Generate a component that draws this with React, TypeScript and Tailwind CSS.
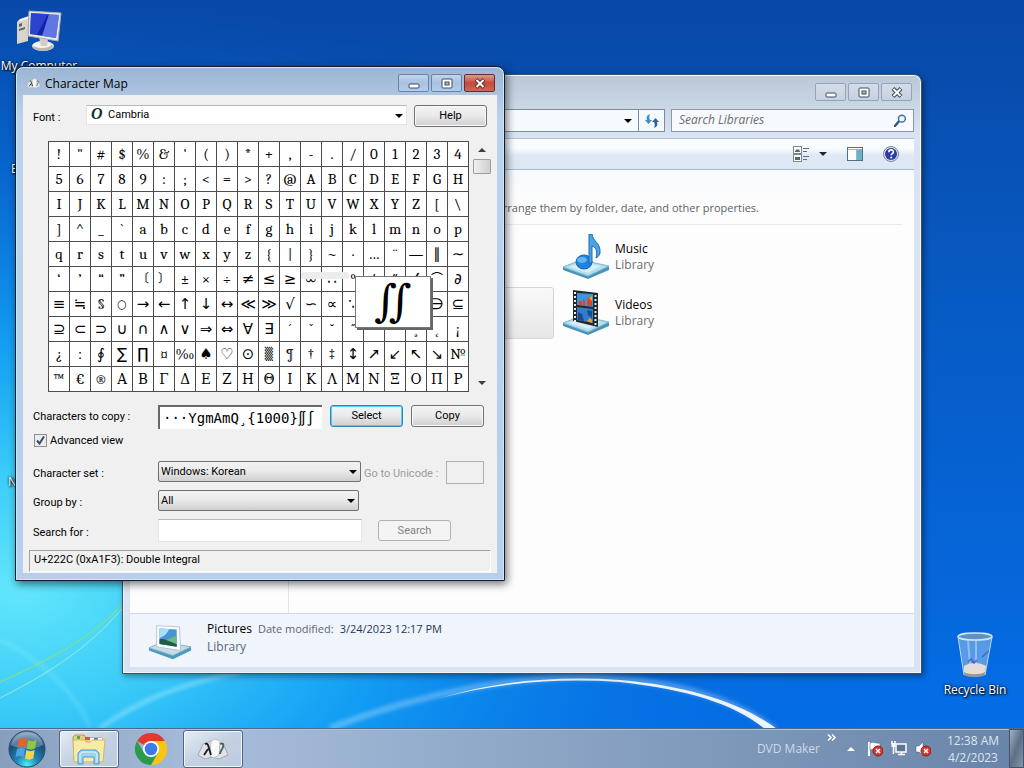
import { useState } from "react"
import type { ReactNode } from "react"

const rows = [
  "!\"#$%&'()*+,-./01234",
  "56789:;<=>?@ABCDEFGH",
  "IJKLMNOPQRSTUVWXYZ[\\",
  "]^_`abcdefghijklmnop",
  "qrstuvwxyz{|}~·…¨—∥∼",
  "‘’“”〔〕±×÷≠≤≥∞∴°′″∠⌒∂",
  "≡≒§○→←↑↓↔≪≫√∽∝∵∫∬∈∋⊆",
  "⊇⊂⊃∪∩∧∨⇒⇔∀∃´ˇ˘˝˚˙¸˛¡",
  "¿ː∮∑∏¤‰♠♡⊙▒¶†‡↕↗↙↖↘№",
  "™€®ΑΒΓΔΕΖΗΘΙΚΛΜΝΞΟΠΡ",
]

const uiFont = "font-['Open_Sans','Noto_Sans',sans-serif]"
const formFont = "font-['Roboto','Noto_Sans',sans-serif]"
const serifFont = "font-['Cambria','DejaVu_Serif_Condensed','DejaVu_Serif','DejaVu_Sans','Noto_Sans_CJK_KR',serif]"

// Arrows, operators and shapes are drawn wider than letters
function glyphClass(char: string) {
  if (/[\u2190-\u22ff\u2660-\u266f]/.test(char)) {
    return "text-[15px] font-['DejaVu_Sans','Noto_Sans_CJK_KR',sans-serif]"
  }
  if (/[○▒〔〕⌒]/.test(char)) return "text-[12px]"
  return "text-[15px]"
}

function Wallpaper() {
  return (
    <svg aria-hidden className="absolute inset-0 h-full w-full" viewBox="0 0 1024 768" preserveAspectRatio="none">
      <defs>
        <linearGradient id="sky" x1="0" y1="0" x2="0" y2="1">
          <stop offset="0" stopColor="#0848a6" />
          <stop offset="0.35" stopColor="#0759c1" />
          <stop offset="0.8" stopColor="#0568dd" />
          <stop offset="1" stopColor="#0470ea" />
        </linearGradient>
        <radialGradient id="glow" gradientUnits="userSpaceOnUse" cx="0" cy="0" r="1" gradientTransform="translate(20 590) scale(880 600)">
          <stop offset="0" stopColor="#62e6fb" />
          <stop offset="0.2" stopColor="#3acbf8" />
          <stop offset="0.42" stopColor="#14a3f6" stopOpacity="0.9" />
          <stop offset="0.7" stopColor="#0879e6" stopOpacity="0.5" />
          <stop offset="1" stopColor="#0560cf" stopOpacity="0" />
        </radialGradient>
        <filter id="soft"><feGaussianBlur stdDeviation="2" /></filter>
      </defs>
      <rect width="1024" height="768" fill="url(#sky)" />
      <rect width="1024" height="768" fill="url(#glow)" />
      <path d="M0 682C60 655 100 632 126 600" fill="none" stroke="#7fe08a" strokeWidth="1.5" opacity="0.8" />
      <path d="M0 698C60 668 105 636 140 585" fill="none" stroke="#b7f3c2" strokeWidth="1" opacity="0.7" />
      <path d="M0 640C45 660 80 700 90 728" fill="none" stroke="#a8f4ff" strokeWidth="3" opacity="0.3" filter="url(#soft)" />
      <path d="M100 728C140 700 180 684 240 672" fill="none" stroke="#d6fbff" strokeWidth="3" opacity="0.5" filter="url(#soft)" />
      <path d="M330 728C430 690 520 676 590 677C680 680 740 702 775 730" fill="none" stroke="#fff" strokeWidth="6" opacity="0.3" filter="url(#soft)" />
      <path d="M440 698C500 680 560 676 620 680C690 686 745 704 778 730L766 730C735 704 690 690 620 682C560 678 500 682 440 698Z" fill="#fff" opacity="0.9" />
    </svg>
  )
}

function Caret({ className = "" }: { className?: string }) {
  return (
    <svg aria-hidden width="8" height="4" viewBox="0 0 8 4" className={`pointer-events-none shrink-0 ${className}`}>
      <path d="M0 0h8L4 4z" fill="currentColor" />
    </svg>
  )
}

function MyComputerIcon() {
  return (
    <svg aria-hidden width="46" height="44" viewBox="0 0 46 44">
      <path d="M1 13l11-5v24L1 35z" fill="#d9d5cc" />
      <path d="M1 13l3-3 9-3-1 3z" fill="#f6f4ef" />
      <path d="M3 15l3-1v3l-3 1zM3 20l6-2v2l-6 2z" fill="#5f6560" />
      <ellipse cx="27" cy="37" rx="11" ry="5" fill="#e8e6e1" />
      <ellipse cx="27" cy="38" rx="10" ry="4" fill="#bcb9b2" />
      <ellipse cx="26" cy="36" rx="9" ry="3" fill="#f3f2ee" />
      <path d="M23 28l9 2-1 7h-6z" fill="#cfcdc8" />
      <path d="M13 2l32 2-3 28-30-5z" fill="#eceae5" stroke="#a9acb0" />
      <path d="M15 4l28 2-3 23-26-4z" fill="#1320ae" />
      <path d="M15 4l17 1-11 21-7-1z" fill="#3d58e0" opacity="0.6" />
      <path d="M33 5l10 1-3 23-14-2z" fill="#8ba6ff" opacity="0.65" />
    </svg>
  )
}

function RecycleBinIcon() {
  return (
    <svg aria-hidden width="38" height="46" viewBox="0 0 38 46">
      <path d="M2 4l6 38c5 3 17 3 21 0l7-38z" fill="#8fbbe8" opacity="0.6" />
      <path d="M8 34c6-4 16-4 22 0l-1 8c-5 3-16 3-21 0z" fill="#e4dcd8" />
      <path d="M8 40c5 3 16 3 21 0v3c-5 3-16 3-21 0z" fill="#9b9696" />
      <path d="M12 8l2 26M20 8v24" stroke="#c9e2f8" strokeWidth="2" opacity="0.5" />
      <path d="M34 18l-8 7M12 30l3-3 3 4 3-3" fill="none" stroke="#4657bd" strokeWidth="1.500" opacity="0.8" />
      <ellipse cx="19" cy="4.500" rx="17" ry="3.500" fill="#5f91c4" stroke="#cfeceb" strokeWidth="1.500" />
      <path d="M2 5l6 38M36 5l-7 38" stroke="#b8d8f2" fill="none" />
    </svg>
  )
}

function LibraryBase() {
  return (
    <>
      <path d="M1 33L19 26l28 6v4L26 45 1 36z" fill="#4a93b9" />
      <path d="M1 33L19 26l28 6-21 10z" fill="#b5ddec" stroke="#7fbcd6" />
      <path d="M7 33l13-5 19 4-13 7z" fill="#d6eef7" />
    </>
  )
}

function MusicIcon() {
  return (
    <svg aria-hidden width="48" height="46" viewBox="0 0 48 46">
      <LibraryBase />
      <ellipse cx="22" cy="28" rx="8" ry="7" fill="#1f83dd" stroke="#1160ae" />
      <ellipse cx="20" cy="26" rx="5" ry="3" fill="#5eb6f6" />
      <path d="M27 0h3c1 8 9 9 8 19-1 3-2 4-4 5 2-8-1-11-4-12v17h-3z" fill="#4aa3e4" stroke="#1c6cb5" />
    </svg>
  )
}

function VideosIcon() {
  return (
    <svg aria-hidden width="48" height="46" viewBox="0 0 48 46">
      <LibraryBase />
      <path d="M11 0l25 3v34l-25-6z" fill="#24272a" />
      <path d="M15 3l16 1v13l-16-2z" fill="#3b96df" />
      <path d="M15 17l16 2v14l-16-3z" fill="#2e7ecb" />
      <path d="M17 11h3v4h-3zM21 9l2 2v5h-2zM25 10l3-4 2 3v7h-5z" fill="#d9442c" />
      <path d="M27 8l3-2v5z" fill="#f4a542" />
      <path d="M16 22l4 2 2 7-6-1zM25 20l5 1v7l-4-3z" fill="#1d4a8f" />
      <path d="M25 31l3-3 2 2v3z" fill="#e8a23c" />
      <path d="M13 2v30M33.500 5v31" stroke="#e4efe8" strokeWidth="2" strokeDasharray="2 2" />
    </svg>
  )
}

function PicturesIcon() {
  return (
    <svg aria-hidden width="44" height="38" viewBox="0 0 46 38">
      <path d="M1 25l14-6 30 5v4L26 37 1 28z" fill="#4b9bb8" />
      <path d="M1 25l14-6 30 5-19 9z" fill="#c3dce9" stroke="#8db7cb" />
      <path d="M9 2l24 1 1 25-25-4z" fill="#fbfdff" stroke="#b8c4cf" />
      <path d="M12 5l18 1v18l-18-3z" fill="#4796d4" />
      <path d="M12 5l10 .5c-2 5-5 8-10 9z" fill="#a9dcf5" />
      <path d="M12 16c6-1 10 2 18 5v3l-18-3z" fill="#1e5c48" />
      <path d="M19 17c4-2 8-4 11-4v8z" fill="#70b987" />
    </svg>
  )
}

function CharMapIcon({ size }: { size: number }) {
  return (
    <svg aria-hidden width={size} height={size} viewBox="0 0 32 32" className="shrink-0">
      <path d="M1 22L6 11l8-3 4 1 8 1 5 12-9 4-7-2-7 2z" fill="#dfe3e6" stroke="#a3aab0" />
      <path d="M14 8l4-2 5 2-1 14-5 3-4-2z" fill="#fafafa" stroke="#bcc2c6" />
      <path d="M8 11c3-1 3 1 4 4l2 7M11 16l-4 6" fill="none" stroke="#161c22" strokeWidth="1.800" />
      <path d="M23 11c3-1 4 0 3 3-1 3-3 4-3 7" fill="none" stroke="#4f5b55" strokeWidth="1.800" />
    </svg>
  )
}

type Glyph = "min" | "max" | "close"

function WindowGlyph({ kind, light }: { kind: Glyph; light?: boolean }) {
  const stroke = light ? "#6f2b2b" : "#3c4a5e"
  return (
    <svg aria-hidden width="12" height="11" viewBox="0 0 12 11">
      {kind === "min" && <rect x="1" y="6" width="10" height="4" rx="1" fill="#fff" stroke={stroke} />}
      {kind === "max" && (
        <>
          <rect x="1" y="1" width="10" height="9" rx="1" fill="#fff" stroke={stroke} />
          <rect x="4" y="4" width="4" height="3" fill="#aebfd3" stroke={stroke} />
        </>
      )}
      {kind === "close" && (
        <>
          <path d="M2 1.500l8 8M10 1.500l-8 8" stroke={stroke} strokeWidth="4" />
          <path d="M2.500 2l7 7M9.500 2l-7 7" stroke="#fff" strokeWidth="2" />
        </>
      )}
    </svg>
  )
}

function WindowButtons({ active }: { active?: boolean }) {
  const base = "flex h-[18px] w-[31px] items-center justify-center rounded-[2px] border"
  const tone = active
    ? "border-[#6583ac] bg-linear-to-b from-[#c3d5ec] via-[#a9c1e0] to-[#b4cdea]"
    : "border-[#94a3b8] bg-linear-to-b from-[#d4dde8] to-[#c6d2e0]"
  const close = active
    ? "border-[#6b2a33] bg-linear-to-b from-[#dd9a8c] via-[#c5493a] to-[#cb6a55]"
    : tone
  return (
    <div className="flex gap-[2px]">
      <button aria-label="Minimize" className={`${base} ${tone}`}><WindowGlyph kind="min" /></button>
      <button aria-label="Maximize" className={`${base} ${tone}`}><WindowGlyph kind="max" /></button>
      <button aria-label="Close" className={`${base} ${close}`}><WindowGlyph kind="close" light={active} /></button>
    </div>
  )
}

function Library({ name, icon }: { name: string; icon: ReactNode }) {
  return (
    <button className="flex h-[52px] items-center gap-[5px] pl-[3px] text-left">
      {icon}
      <span className="text-[12px] leading-4">
        <span className="block text-black">{name}</span>
        <span className="block text-[#6d6d6d]">Library</span>
      </span>
    </button>
  )
}

function ExplorerWindow() {
  return (
    <section
      aria-label="Libraries"
      className="absolute top-[74px] left-[122px] flex w-[800px] flex-col rounded-t-lg border border-[#3c5068] bg-[#d9e4f0] bg-linear-to-b from-[#b9c7d8] via-[#d9e4f0] via-10% to-[#d9e4f0] px-[7px] pb-[6px] shadow-[inset_0_0_0_1px_#eef4fa,2px_2px_6px_rgba(0,0,0,0.4)]"
    >
      <div className="flex h-[34px] justify-end pt-[8px] pr-[2px]">
        <WindowButtons />
      </div>
      <div className="flex h-[23px] gap-[6px]">
        <div className="flex flex-1 border border-[#7d8da1] bg-[#f6f9fd]">
          <button aria-label="Previous locations" className="ml-auto flex w-[20px] items-center justify-center text-black">
            <Caret />
          </button>
          <button aria-label="Refresh" className="flex w-[26px] items-center justify-center border-l border-[#7d8da1]">
            <svg aria-hidden width="14" height="14" viewBox="0 0 14 14">
              <path d="M5 0C2 1 1 3 2 6H0l3.500 4L7 6H5C4 4 4 2 5 0z" fill="#3b8ed2" />
              <path d="M9 14c3-1 4-3 3-6h2l-3.500-4L7 8h2c1 2 1 4 0 6z" fill="#2a669f" />
            </svg>
          </button>
        </div>
        <div className="flex w-[243px] items-center border border-[#8897ab] bg-[#f6f9fd] pr-[6px] pb-px pl-[7px]">
          <input
            aria-label="Search Libraries"
            placeholder="Search Libraries"
            className="min-w-0 flex-1 bg-transparent text-[12px] italic outline-none placeholder:text-[#6d6d6d]"
          />
          <svg aria-hidden width="13" height="13" viewBox="0 0 14 14">
            <path d="M1 13l5-6" stroke="#31557e" strokeWidth="2.500" strokeLinecap="round" />
            <circle cx="8.500" cy="5" r="3.700" fill="#eaf4ff" stroke="#45719f" strokeWidth="1.600" />
          </svg>
        </div>
      </div>
      <div className="mt-[6px] flex h-8 items-center justify-end gap-[20px] border-y border-t-[#b4c3d3] border-b-[#a9b8cb] bg-linear-to-b from-[#fafdff] from-30% via-[#dfe8f5] via-55% to-[#dde8f5] pr-[15px]">
        <button aria-label="Change your view" className="flex items-center gap-[9px] text-[#1b2736]">
          <svg aria-hidden width="17" height="16" viewBox="0 0 17 16">
            <rect x="0.500" y="0.500" width="8" height="7" fill="#fff" stroke="#7b8a86" />
            <rect x="0.500" y="8.500" width="8" height="7" fill="#fff" stroke="#7b8a86" />
            <path d="M2 5l2-2 1 1 1-1 1 3H2zM2 11h5v3H2z" fill="#4f6b68" />
            <path d="M10 2.500h6M10 5.500h4M10 10.500h6M10 13.500h4" stroke="#5c6c7c" />
          </svg>
          <Caret />
        </button>
        <button aria-label="Show the preview pane">
          <svg aria-hidden width="16" height="14" viewBox="0 0 16 14">
            <rect x="0.500" y="0.500" width="15" height="13" fill="#fbfeff" stroke="#4d7188" />
            <rect x="10" y="3" width="5" height="10" fill="#69b4c9" />
            <path d="M1 2.500h14M9.500 3v10" stroke="#9bb8c9" />
          </svg>
        </button>
        <button aria-label="Get help">
          <svg aria-hidden width="16" height="16" viewBox="0 0 16 16">
            <circle cx="8" cy="8" r="7.500" fill="#dbe4f3" stroke="#7c86a0" />
            <circle cx="8" cy="8" r="6" fill="#2b3f9f" />
            <path d="M5.800 6.200c0-3 4.600-3 4.600-.3 0 1.600-2.200 1.700-2.200 3.300" fill="none" stroke="#fff" strokeWidth="1.600" />
            <circle cx="8.200" cy="11.500" r="1" fill="#fff" />
          </svg>
        </button>
      </div>
      <div className="flex h-[443px] bg-[#fdfdfd]">
        <nav aria-label="Folders" className="w-[159px] border-r border-[#dfe6ee]" />
        <div className="min-w-0 flex-1 bg-linear-to-b from-[#f6fafe] to-[#fdfdfd] to-8% pt-[28px] pr-3 pl-[15px]">
          <p className="w-[455px] text-right text-[11px] leading-5 whitespace-nowrap text-[#5e6266]">
            arrange them by folder, date, and other properties.
          </p>
          <hr className="mt-[6px] border-[#e9ebee]" />
          <div className="mt-[6px] grid grid-cols-[250px_220px] gap-x-[5px] gap-y-1">
            <span />
            <Library name="Music" icon={<MusicIcon />} />
            <button aria-label="Pictures" className="rounded-[3px] border border-[#d5d5d5] bg-linear-to-b from-[#f9f9f9] to-[#e7e7e7]" />
            <Library name="Videos" icon={<VideosIcon />} />
          </div>
        </div>
      </div>
      <div className="flex h-[54px] items-start gap-[15px] border-t border-[#cfd8e2] bg-[#f0f4fb] pt-[6px] pl-[18px] text-[12px] leading-[18px] text-[#5a6779]">
        <div className="pt-[3px]"><PicturesIcon /></div>
        <div>
          <p>
            <span className="text-black">Pictures</span>
            <span className="ml-[6px] text-[11px]">Date modified:</span>
            <span className="ml-[6px] text-[11px] text-[#1e395b]">3/24/2023 12:17 PM</span>
          </p>
          <p>Library</p>
        </div>
      </div>
    </section>
  )
}

function FormButton({ children, primary }: { children: ReactNode; primary?: boolean }) {
  const tone = primary
    ? "border-[#3c7fb1] shadow-[inset_0_0_0_1px_#55d0f4] from-[#eef6f9]"
    : "border-[#707070] shadow-[inset_0_0_0_1px_#fafafa] from-[#f2f2f2]"
  return (
    <button className={`h-[22px] w-[73px] rounded-[3px] border bg-linear-to-b via-[#ebebeb] via-45% to-[#cfcfcf] pt-px text-black ${tone}`}>
      {children}
    </button>
  )
}

function FormSelect({ id, value, width }: { id: string; value: string; width: string }) {
  return (
    <div className={`relative ${width}`}>
      <select
        id={id}
        className="h-[21px] w-full appearance-none rounded-[2px] border border-[#707070] bg-linear-to-b from-[#f2f2f2] via-[#ebebeb] via-45% to-[#cfcfcf] pt-px pl-[2px] text-black"
      >
        <option>{value}</option>
      </select>
      <Caret className="absolute top-[9px] right-1" />
    </div>
  )
}

function CharacterMap() {
  const [copied, setCopied] = useState("···YgmAmQ¸{1000}∬∫")
  const [advanced, setAdvanced] = useState(true)

  return (
    <section
      aria-label="Character Map"
      className="absolute top-[66px] left-[15px] w-[490px] rounded-t-lg border border-[#101c2c] bg-linear-to-b from-[#9bb5d3] via-[#bcd2ec] via-10% to-[#b7cfeb] px-[7px] pb-[7px] shadow-[inset_0_0_0_1px_#c9ecfb,2px_3px_8px_rgba(0,0,0,0.55)]"
    >
      <header className="flex h-7 items-center gap-1 pt-1 pl-[3px]">
        <CharMapIcon size={15} />
        <h1 className="pt-[2px] text-[12px] leading-4 text-black">Character Map</h1>
        <div className="ml-auto pr-[2px]"><WindowButtons active /></div>
      </header>
      <div className={`bg-[#f0f0f0] pt-[10px] pb-px text-[11px] text-black ${formFont}`}>
        <div className="flex h-[22px] items-start pl-[10px]">
          <label htmlFor="font" className="w-[53px] pt-[5px]">Font :</label>
          <div className="relative w-[321px]">
            <select id="font" className="h-[20px] w-full appearance-none border border-[#e2e3ea] border-t-[#b5b8bf] bg-white pt-px pl-[21px]">
              <option>Cambria</option>
            </select>
            <span aria-hidden className="pointer-events-none absolute top-px left-[5px] font-['Liberation_Serif',serif] text-[16px] leading-4 font-bold text-[#12302a] italic">O</span>
            <Caret className="absolute top-[9px] right-1" />
          </div>
          <div className="ml-[7px]"><FormButton>Help</FormButton></div>
        </div>

        <div className="relative mt-[14px] flex pl-[25px]">
          <table className={`w-[421px] table-fixed border-collapse bg-white leading-4 ${serifFont}`}>
            <tbody>
              {rows.map((row) => (
                <tr key={row} className="h-[25px]">
                  {Array.from(row).map((char) => (
                    <td key={char} className={`overflow-hidden border border-[#4c4c4c] p-0 text-center whitespace-nowrap ${glyphClass(char)}`}>{char}</td>
                  ))}
                </tr>
              ))}
            </tbody>
          </table>
          <div className="ml-[3px] flex w-[19px] flex-col items-center py-[7px]">
            <Caret className="rotate-180 text-[#3f3f3f]" />
            <div className="mt-[7px] h-[15px] w-[18px] rounded-[1px] border border-[#9d9d9d] bg-linear-to-r from-[#f0f0f0] to-[#cfcfcf]" />
            <Caret className="mt-auto text-[#3f3f3f]" />
          </div>
          <div className="absolute top-[131px] left-[278px] h-[7px] w-[48px] rounded-[3px] bg-[#ececec]" />
          <div className="absolute top-[135px] left-[332px] flex h-[52px] w-[76px] items-center justify-center border border-[#777] bg-white text-[44px] leading-none shadow-[2px_2px_0_#666] font-['Liberation_Serif','DejaVu_Serif',serif]">
            ∬
          </div>
        </div>

        <div className="mt-[13px] flex h-6 items-start pl-[10px]">
          <label htmlFor="copy" className="w-[125px] pt-1">Characters to copy :</label>
          <input
            id="copy"
            value={copied}
            onChange={(e) => setCopied(e.target.value)}
            className="h-6 w-[164px] border-t-2 border-l-2 border-[#696969] bg-white pl-[3px] font-['DejaVu_Sans_Mono','DejaVu_Sans',monospace] text-[14px]"
          />
          <div className="ml-2 flex gap-2">
            <FormButton primary>Select</FormButton>
            <FormButton>Copy</FormButton>
          </div>
        </div>

        <label className="mt-[4px] flex h-[15px] items-center gap-[3px] pl-[11px]">
          <input
            type="checkbox"
            checked={advanced}
            onChange={(e) => setAdvanced(e.target.checked)}
            className="peer sr-only"
          />
          <span className="flex h-[13px] w-[13px] items-center justify-center border border-[#8e8f8f] bg-[#e9edf2] text-transparent peer-checked:text-[#3f4a63]">
            <svg aria-hidden width="9" height="9" viewBox="0 0 9 9">
              <path d="M1 4.500l2.500 3L8 .5" fill="none" stroke="currentColor" strokeWidth="2" />
            </svg>
          </span>
          <span className="pt-px">Advanced view</span>
        </label>

        <div className="mt-[13px] flex h-[23px] items-start pl-[10px]">
          <label htmlFor="charset" className="w-[125px] pt-[5px]">Character set :</label>
          <FormSelect id="charset" value="Windows: Korean" width="w-[203px]" />
          <label htmlFor="unicode" className="w-[85px] pt-[5px] pl-[3px] whitespace-nowrap text-[#9c9c9c]">Go to Unicode :</label>
          <input id="unicode" disabled className="h-[23px] w-[38px] border border-[#b0b0b0] bg-[#f0f0f0]" />
        </div>
        <div className="mt-[6px] flex h-[21px] items-start pl-[10px]">
          <label htmlFor="group" className="w-[125px] pt-[5px]">Group by :</label>
          <FormSelect id="group" value="All" width="w-[201px]" />
        </div>
        <div className="mt-2 flex h-[23px] items-start pl-[10px]">
          <label htmlFor="search" className="w-[125px] pt-[6px]">Search for :</label>
          <input id="search" className="h-[23px] w-[204px] border border-[#e2e3ea] border-t-[#b5b8bf] bg-white px-1" />
          <button disabled className="mt-px ml-4 h-[21px] w-[73px] rounded-[3px] border border-[#adb2b5] bg-[#f4f4f4] pt-px text-[#838383]">Search</button>
        </div>
        <p className="mx-[6px] mt-2 h-[22px] border border-white border-t-[#a0a0a0] border-l-[#a0a0a0] pt-px pl-1 leading-4">
          U+222C (0xA1F3): Double Integral
        </p>
      </div>
    </section>
  )
}

function StartOrb() {
  return (
    <svg aria-hidden width="38" height="38" viewBox="0 0 38 38">
      <defs>
        <radialGradient id="orb" cx="0.5" cy="0.95" r="0.9">
          <stop offset="0" stopColor="#4ff0f5" />
          <stop offset="0.35" stopColor="#1e86b5" />
          <stop offset="0.75" stopColor="#1b4a78" />
          <stop offset="1" stopColor="#7f9bb8" />
        </radialGradient>
      </defs>
      <circle cx="19" cy="19" r="18" fill="url(#orb)" stroke="#2b4764" />
      <path d="M3 15a16.500 16.500 0 0132 0c-10 5-22 5-32 0z" fill="#c8d8e6" opacity="0.35" />
      <path d="M11 9c3-1.500 5-1.500 8 0l-1.500 8.500c-3-1.500-5-1.500-8 0z" fill="#e8642c" />
      <path d="M20 10c3 1.500 5 1.500 8.500 0L27 18.500c-3 1.500-5 1.500-8.300 0z" fill="#8fc83f" />
      <path d="M9 19c3-1.500 5-1.500 8 0l-1.500 8c-3-1.500-5-1.500-8 0z" fill="#4ba4e4" />
      <path d="M18.300 20c3 1.500 5 1.500 8.400 0l-1.500 8.500c-3 1.500-5 1.500-8.200 0z" fill="#f8d44a" />
    </svg>
  )
}

function FolderIcon() {
  return (
    <svg aria-hidden width="34" height="32" viewBox="0 0 34 32">
      <path d="M1 4l2-2h9l2 3h16v22H2z" fill="#e9cf7c" stroke="#b8984a" />
      <path d="M5 3h3v3H5z" fill="#55a757" />
      <path d="M13 4h5v3h-5z" fill="#d9563d" />
      <path d="M18 5h12v4H18z" fill="#fff" />
      <path d="M22 6h4" stroke="#3f87c9" strokeWidth="2" />
      <path d="M1 7h11l2 2h4l3-2h12l-2 22H2z" fill="#f9eaa6" stroke="#d2b768" />
      <path d="M6 31V20l3-3h15l3 3v11h-5v-7H11v7z" fill="#9bd3f2" stroke="#4c9bcf" />
      <path d="M8 29v-8l2-2h13l2 2v8" fill="none" stroke="#e2f5ff" />
    </svg>
  )
}

function ChromeIcon() {
  return (
    <svg aria-hidden width="32" height="32" viewBox="0 0 32 32">
      <path d="M16 16L2.140 8A16 16 0 0129.860 8z" fill="#dd3b2c" />
      <path d="M16 8h13.860A16 16 0 0116 32l6.930-12z" fill="#fbc413" />
      <path d="M2.140 8A16 16 0 0016 32l6.930-12H16L9.070 20z" fill="#2a9a4b" />
      <circle cx="16" cy="16" r="8" fill="#fff" />
      <circle cx="16" cy="16" r="6.300" fill="#3a7be8" />
    </svg>
  )
}

function ErrorBadge() {
  return (
    <>
      <circle cx="11" cy="10" r="5" fill="#d9372e" stroke="#8b1d1d" />
      <path d="M9 8l4 4M13 8l-4 4" stroke="#fff" strokeWidth="1.500" />
    </>
  )
}

function Taskbar() {
  const task = "flex h-[38px] w-[60px] items-center justify-center rounded-[3px] border border-[#4f6682] bg-linear-to-br from-[#e6edf5] via-[#c3d1e2] to-[#bccbe0] shadow-[inset_0_0_0_1px_#f2f7fc]"
  return (
    <footer className="relative mt-auto flex h-10 items-center border-t border-[#4b6a8c] bg-linear-to-r from-[#879fbc] via-[#a7bddb] via-20% to-[#6884a8] shadow-[inset_0_1px_0_#a9c7e4]">
      <button aria-label="Start" className="ml-2"><StartOrb /></button>
      <button aria-label="Windows Explorer" className={`${task} ml-[13px]`}><FolderIcon /></button>
      <button aria-label="Google Chrome" className="flex w-[64px] items-center justify-center"><ChromeIcon /></button>
      <button aria-label="Character Map" className={task}><CharMapIcon size={32} /></button>
      <div className="ml-auto flex h-full items-center text-[12px] text-[#dde6f0]">
        <button className="text-[#d0dae6]">DVD Maker</button>
        <button aria-label="More toolbars" className="ml-[7px] self-start pt-[5px]">
          <svg aria-hidden width="9" height="7" viewBox="0 0 9 7">
            <path d="M1 .5l3 3-3 3M5 .5l3 3-3 3" fill="none" stroke="#fff" strokeWidth="1.500" />
          </svg>
        </button>
        <button aria-label="Show hidden icons" className="ml-[11px]">
          <svg aria-hidden width="8" height="4" viewBox="0 0 8 4"><path d="M0 4h8L4 0z" fill="#fff" /></svg>
        </button>
        <div className="ml-3 flex gap-2">
          <button aria-label="Action Center">
            <svg aria-hidden width="16" height="16" viewBox="0 0 16 16">
              <path d="M2 1v14" stroke="#fff" strokeWidth="2" />
              <path d="M3 2c4-2 6 1 10 0v7c-4 1-6-2-10 0z" fill="#fff" stroke="#41566e" strokeWidth="0.500" />
              <ErrorBadge />
            </svg>
          </button>
          <button aria-label="Network">
            <svg aria-hidden width="16" height="16" viewBox="0 0 16 16">
              <rect x="5" y="3" width="10" height="8" fill="#5d7590" stroke="#fff" strokeWidth="1.500" />
              <path d="M7 13.500h7M10.500 11v3M2.500 6v7M1 0v3M4 0v3" stroke="#fff" strokeWidth="1.500" />
              <rect x="0.500" y="2" width="4" height="4" fill="#fff" />
            </svg>
          </button>
          <button aria-label="Volume">
            <svg aria-hidden width="16" height="16" viewBox="0 0 16 16">
              <path d="M1 5h3l4-4v14l-4-4H1z" fill="#fff" stroke="#41566e" strokeWidth="0.500" />
              <ErrorBadge />
            </svg>
          </button>
        </div>
        <button className="ml-[9px] w-[66px] text-center leading-[17px]">
          <span className="block">12:38 AM</span>
          <span className="block">4/2/2023</span>
        </button>
        <button aria-label="Show desktop" className="ml-[3px] h-full w-[15px] border border-[#42556c] bg-linear-to-br from-[#a3b3c4] via-[#5c6f86] to-[#8496ab]" />
      </div>
    </footer>
  )
}

export default function App() {
  const label = "text-[12px] leading-4 whitespace-nowrap text-white [text-shadow:1px_1px_2px_#000,0_0_3px_#000]"
  return (
    <main className={`relative flex min-h-screen w-full flex-col overflow-hidden bg-[#0759c1] ${uiFont}`}>
      <Wallpaper />
      <button className="absolute top-[9px] left-[2px] flex w-[74px] flex-col items-center gap-[5px]">
        <MyComputerIcon />
        <span className={label}>My Computer</span>
      </button>
      <button className={`absolute top-[161px] left-[11px] ${label}`}>E</button>
      <button className={`absolute top-[474px] left-[8px] ${label}`}>N</button>
      <button className="absolute right-[12px] bottom-[70px] flex w-[74px] flex-col items-center gap-1">
        <RecycleBinIcon />
        <span className={label}>Recycle Bin</span>
      </button>
      <ExplorerWindow />
      <CharacterMap />
      <Taskbar />
    </main>
  )
}
